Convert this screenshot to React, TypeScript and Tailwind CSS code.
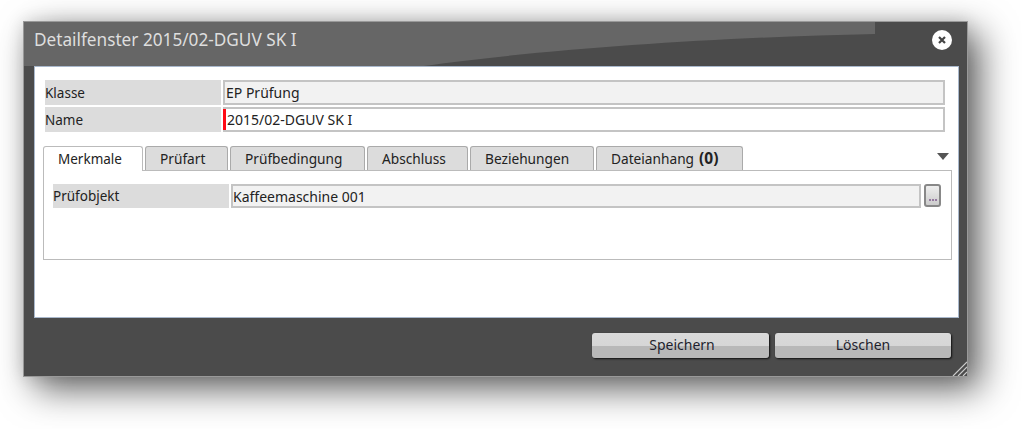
const font = { fontFamily: '"Noto Sans", "DejaVu Sans", sans-serif' };

const tabs = [
  { label: "Prüfart", w: "w-[83px]" },
  { label: "Prüfbedingung", w: "w-[135px]" },
  { label: "Abschluss", w: "w-[101px]" },
  { label: "Beziehungen", w: "w-[124px]" },
];

const tabClass = "h-[24px] pt-[1px] bg-[#dcdcdc] border border-b-0 border-[#aaa] rounded-t-[3px] flex items-center pl-[14px] text-[13.7px]";
const buttonClass =
  "h-[25px] pb-[3px] rounded-[3px] bg-[linear-gradient(#dadada_0%,#d6d6d6_50%,#b8b8b8_52%,#b8b8b8_100%)] shadow-[1px_1px_2px_rgba(0,0,0,0.8)] text-[#1f1f2e]";

function Label({ text, w }: { text: string; w: string }) {
  return <div className={`${w} h-full pt-[1px] bg-[#dcdcdc] flex items-center text-[13.5px] text-[#222]`}>{text}</div>;
}

export default function App() {
  return (
    <div className="w-[1022px] h-[429px] bg-white pt-[21px] pl-[23px] overflow-hidden text-[14px] text-[#222]" style={font}>
      <div className="relative w-[945px] h-[356px] bg-[#4b4b4b] border border-[#999] shadow-[12px_12px_34px_rgba(0,0,0,0.62),0_0_16px_rgba(0,0,0,0.12)] flex flex-col">
        <svg className="absolute left-0 top-0" width="943" height="44" viewBox="0 0 943 44">
          <path d="M0 0H851V12C700 15 520 27 400 44H0Z" fill="#666666" />
        </svg>
        <div className="relative h-[44px] pl-[10px] pr-[15px] pb-[9px] flex items-center justify-between">
          <span className="text-[17.2px] text-[#dedede] leading-none">Detailfenster 2015/02-DGUV SK I</span>
          <span className="w-[20px] h-[20px] rounded-full bg-white flex items-center justify-center">
            <svg width="10" height="10" viewBox="0 0 10 10">
              <path d="M2 2L8 8M8 2L2 8" stroke="#444" strokeWidth="2.2" />
            </svg>
          </span>
        </div>

        <div className="relative ml-[10px] w-[925px] h-[252px] bg-white border border-[#a9b8cc] pt-[13px]">
          <div className="pl-[10px] flex flex-col gap-[2px]">
            <div className="h-[25px] flex gap-[2px]">
              <Label text="Klasse" w="w-[176px]" />
              <div className="w-[722px] h-full bg-[#f2f2f2] border-2 border-[#c4c4c4] flex items-center pl-[1px]">EP Prüfung</div>
            </div>
            <div className="h-[25px] flex gap-[2px]">
              <Label text="Name" w="w-[176px]" />
              <div className="w-[722px] h-full bg-white border-2 border-l-0 border-[#c4c4c4] flex items-center">
                <span className="w-[3px] h-full bg-[#ff0a14] mr-[1px]"></span>2015/02-DGUV SK I
              </div>
            </div>
          </div>

          <div className="relative ml-[8px] mt-[14px] w-[909px]">
            <div className="flex items-end gap-[2px] h-[25px] border-b border-[#bbb]">
              <div className="w-[100px] h-[25px] mb-[-1px] pt-[1px] bg-white border border-b-0 border-[#bbb] rounded-t-[3px] flex items-center pl-[14px] text-[13.5px]">Merkmale</div>
              {tabs.map((t) => (
                <div key={t.label} className={`${t.w} ${tabClass}`}>{t.label}</div>
              ))}
              <div className={`w-[147px] gap-[5px] ${tabClass}`}>
                Dateianhang <b className="text-[15.5px] leading-none">(0)</b>
              </div>
              <svg className="absolute right-[3px] top-[7px]" width="12" height="7" viewBox="0 0 12 7">
                <path d="M0 0H12L6 7Z" fill="#555" />
              </svg>
            </div>
            <div className="h-[89px] border border-t-0 border-[#bbb] pt-[13px] pl-[9px] flex items-start gap-[2px]">
              <div className="h-[24px] flex gap-[2px]">
                <Label text="Prüfobjekt" w="w-[176px]" />
                <div className="w-[690px] h-full bg-[#f2f2f2] border-2 border-[#c4c4c4] flex items-center">Kaffeemaschine 001</div>
              </div>
              <div className="ml-[1px] w-[17px] h-[23px] rounded-[3px] border-2 border-[#888] bg-gradient-to-b from-[#eee] to-[#ccc] flex items-end justify-center pb-[4px] gap-[1px]">
                <span className="w-[2px] h-[2px] bg-[#957aa0]"></span>
                <span className="w-[2px] h-[2px] bg-[#957aa0]"></span>
                <span className="w-[2px] h-[2px] bg-[#957aa0]"></span>
              </div>
            </div>
          </div>
        </div>

        <div className="relative flex justify-end gap-[6px] pr-[16px] pt-[15px]">
          <button className={`w-[177px] pl-[3px] ${buttonClass}`}>Speichern</button>
          <button className={`w-[176px] ${buttonClass}`}>Löschen</button>
        </div>
        <svg className="absolute right-0 bottom-0" width="15" height="15" viewBox="0 0 15 15">
          <path d="M1 15L15 1M6 15L15 6M11 15L15 11" stroke="#ccc" strokeWidth="1.2" />
        </svg>
      </div>
    </div>
  );
}
